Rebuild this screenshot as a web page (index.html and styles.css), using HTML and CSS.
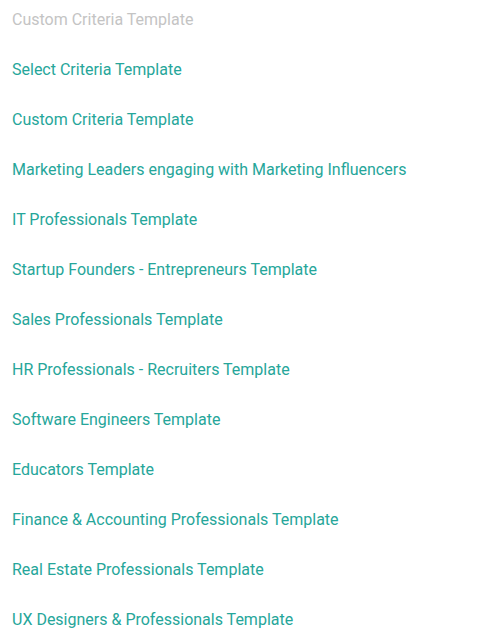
FILE: index.html
```html
<!DOCTYPE html>
<html lang="en">
<head>
  <meta charset="UTF-8">
  <meta name="viewport" content="width=device-width, initial-scale=1.0">
  <title>Criteria Templates</title>
  <link rel="stylesheet" href="styles.css">
</head>
<body>
  <ul class="template-list">
    <li class="template-item template-placeholder">Custom Criteria Template</li>
    <li class="template-item">Select Criteria Template</li>
    <li class="template-item">Custom Criteria Template</li>
    <li class="template-item">Marketing Leaders engaging with Marketing Influencers</li>
    <li class="template-item">IT Professionals Template</li>
    <li class="template-item">Startup Founders - Entrepreneurs Template</li>
    <li class="template-item">Sales Professionals Template</li>
    <li class="template-item">HR Professionals - Recruiters Template</li>
    <li class="template-item">Software Engineers Template</li>
    <li class="template-item">Educators Template</li>
    <li class="template-item">Finance &amp; Accounting Professionals Template</li>
    <li class="template-item">Real Estate Professionals Template</li>
    <li class="template-item">UX Designers &amp; Professionals Template</li>
  </ul>
</body>
</html>
```

FILE: styles.css
```css
body {
  margin: 0;
  font-family: Roboto, "Liberation Sans", sans-serif;
  background: #fff;
}
.template-list {
  list-style: none;
  margin: 0;
  padding: 10px 12px;
}
.template-item {
  font-size: 16px;
  line-height: 20px;
  padding-bottom: 30px;
  color: #26a69a;
  cursor: pointer;
}
.template-placeholder {
  color: #c4c4c4;
  cursor: default;
}
```
